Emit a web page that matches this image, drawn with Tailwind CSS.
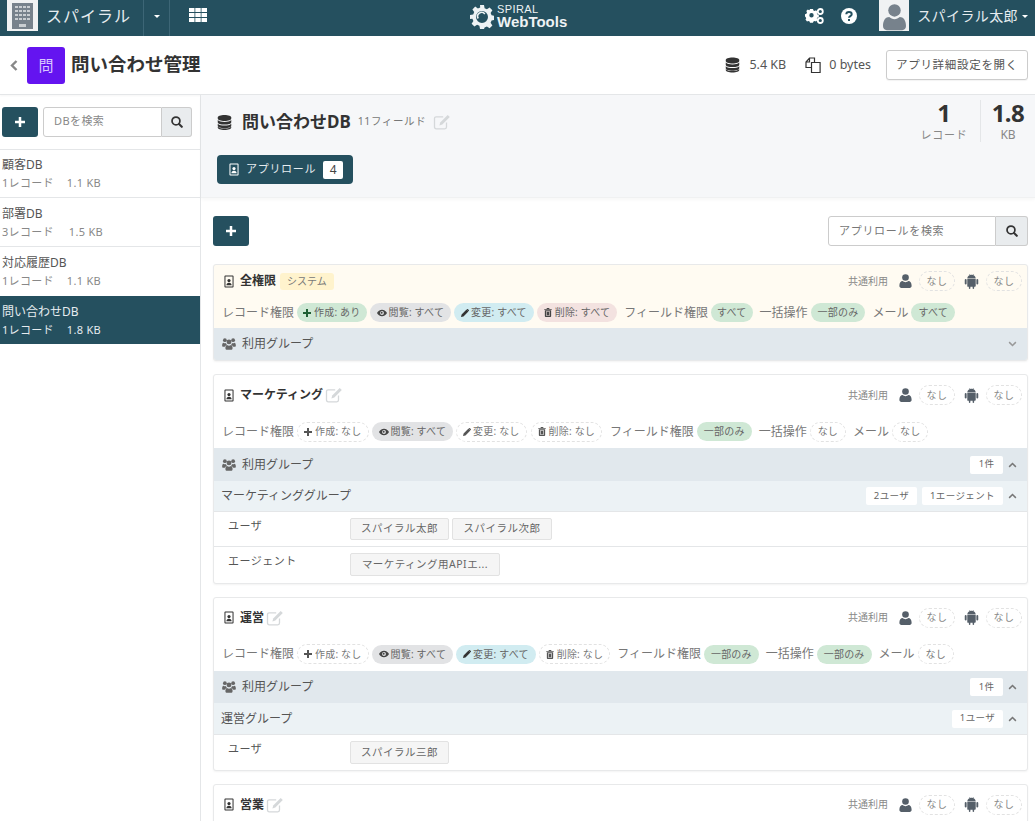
<!DOCTYPE html>
<html lang="ja">
<head>
    <meta charset="UTF-8" />
    <meta name="viewport" content="width=device-width, initial-scale=1.0" />
    <title>問い合わせ管理</title>
    <script src="https://cdn.jsdelivr.net/npm/@tailwindcss/browser@4"></script>
</head>
<body class="h-[821px] overflow-hidden bg-white text-[#555] font-['Noto_Sans','Noto_Sans_CJK_JP',sans-serif]">

    <!-- icon set -->
    <svg class="hidden">
        <symbol id="i-db" viewBox="0 0 16 16"><path d="M8 0C3.800 0 .8 1.100.8 2.600v1.200C.8 5.300 3.800 6.400 8 6.400s7.200-1.100 7.200-2.600V2.600C15.200 1.100 12.200 0 8 0z"/><path d="M.8 5.400v2.200C.8 9.100 3.800 10.200 8 10.200s7.200-1.100 7.200-2.600V5.400C13.600 6.900 11 7.500 8 7.500S2.400 6.900.8 5.400z"/><path d="M.8 9.200v2.200c0 1.500 3 2.600 7.200 2.600s7.200-1.100 7.200-2.600V9.200c-1.600 1.500-4.200 2.100-7.200 2.100S2.400 10.700.8 9.200z"/><path d="M.8 12.400v1c0 1.500 3 2.600 7.200 2.600s7.200-1.100 7.200-2.600v-1c-1.600 1.400-4.200 2-7.200 2s-5.600-.6-7.200-2z"/></symbol>
        <symbol id="i-plus" viewBox="0 0 12 12"><path d="M4.500 0h3v4.500H12v3H7.500V12h-3V7.500H0v-3h4.500z"/></symbol>
        <symbol id="i-search" viewBox="0 0 14 14"><path fill="none" stroke="currentColor" stroke-width="2" d="M5.800 1.200a4.600 4.600 0 1 0 0 9.200 4.600 4.600 0 0 0 0-9.200z"/><path fill="none" stroke="currentColor" stroke-width="2.400" stroke-linecap="round" d="M9.400 9.400l3.200 3.200"/></symbol>
        <symbol id="i-user" viewBox="0 0 14 16"><circle cx="7" cy="4" r="3.800"/><path d="M0 13.500C0 10 1.600 8 3.800 8c.8.700 2 1.300 3.200 1.300S9.400 8.700 10.200 8C12.400 8 14 10 14 13.500 14 15 13 16 11.700 16H2.300C1 16 0 15 0 13.500z"/></symbol>
        <symbol id="i-android" viewBox="0 0 16 16"><path d="M3.500 5.300h9v7.400c0 .5-.4.900-.9.900h-.8v1.600a.8.8 0 0 1-1.600 0v-1.600H6.800v1.600a.8.8 0 0 1-1.600 0v-1.600h-.8a.9.9 0 0 1-.9-.9z"/><path d="M3.500 4.700C3.600 3 4.500 1.800 5.900 1.200l-.6-1 .3-.2.7 1C7 .8 7.500.7 8 .7s1 .1 1.700.3l.7-1 .3.2-.6 1c1.400.6 2.300 1.800 2.400 3.500z"/><rect x=".8" y="5.300" width="2" height="5.800" rx="1"/><rect x="13.200" y="5.300" width="2" height="5.800" rx="1"/></symbol>
        <symbol id="i-users" viewBox="0 0 16 14"><circle cx="3.200" cy="2.600" r="2.200"/><circle cx="12.800" cy="2.600" r="2.200"/><circle cx="8" cy="4.600" r="2.800"/><path d="M0 9c0-2.600.6-3.600 1.800-3.600.5.400 1 .6 1.700.6.400 0 .7 0 1-.2.100 1 .6 1.800 1.300 2.400C4.300 8.500 3.300 9.600 3.100 10.200H1.300C.6 10.200 0 9.900 0 9zM16 9c0-2.600-.6-3.600-1.800-3.600-.5.400-1 .6-1.700.6-.4 0-.7 0-1-.2-.1 1-.6 1.800-1.300 2.400 1.500.3 2.500 1.400 2.700 2h1.800c.7 0 1.300-.3 1.300-1.200z"/><path d="M3.800 11.600c0-2.300 1-3.400 2-3.400.6.500 1.300.8 2.200.8s1.600-.3 2.200-.8c1 0 2 1.100 2 3.400 0 1.400-.8 2.200-1.900 2.200H5.700c-1.100 0-1.900-.8-1.900-2.200z"/></symbol>
        <symbol id="i-pencil" viewBox="0 0 12 12"><path d="M8.300.9l2.800 2.800-7.400 7.400L0 12l.9-3.700zM9.100.3c.4-.4 1-.4 1.400 0l1.200 1.200c.4.400.4 1 0 1.400l-.5.500L8.600.8z"/></symbol>
        <symbol id="i-eye" viewBox="0 0 14 10"><path fill-rule="evenodd" d="M7 .5C3.800.5 1.300 2.400 0 5c1.300 2.600 3.800 4.500 7 4.500s5.700-1.900 7-4.500C12.700 2.400 10.200.5 7 .5zM7 2.300a2.700 2.700 0 1 1 0 5.400 2.700 2.700 0 0 1 0-5.400z"/><circle cx="6.600" cy="4.600" r="1.300"/></symbol>
        <symbol id="i-trash" viewBox="0 0 10 12"><path fill-rule="evenodd" d="M3.500 0h3l.5 1.200h3v1.200H0V1.200h3zM.8 3h8.400v7.600c0 .8-.6 1.400-1.400 1.400H2.200C1.400 12 .8 11.400.8 10.600zm1.700 1.400v6h5v-6z"/><rect x="3.200" y="5" width="3.600" height="4.800"/></symbol>
        <symbol id="i-role" viewBox="0 0 10 14"><path fill-rule="evenodd" d="M1 .5h8c.5 0 .9.400.9.900v11.200c0 .5-.4.900-.9.900H1c-.5 0-.9-.4-.9-.9V1.400C.1.900.5.500 1 .5zm.2 1.100v10.800h7.600V1.600z"/><circle cx="5" cy="6" r="1.700"/><path d="M2.200 11c0-1.700 1-2.700 2.800-2.700s2.800 1 2.800 2.700z"/></symbol>
        <symbol id="i-edit" viewBox="0 0 18 16"><path fill="none" stroke="currentColor" stroke-width="1.300" d="M13.500 8.500v4.600c0 1-.8 1.700-1.700 1.700H3.200c-1 0-1.700-.7-1.700-1.700V4.500c0-1 .7-1.700 1.700-1.700h7"/><path d="M14.700 1l2.100 2.100-7.500 7.500-2.900.8.800-2.900z"/></symbol>
        <symbol id="i-down" viewBox="0 0 12 8"><path fill="none" stroke="currentColor" stroke-width="2" d="M1.500 1.500L6 6l4.500-4.500"/></symbol>
        <symbol id="i-up" viewBox="0 0 12 8"><path fill="none" stroke="currentColor" stroke-width="2" d="M1.500 6.500L6 2l4.500 4.500"/></symbol>
        <symbol id="i-gear" viewBox="0 0 24 24"><path fill-rule="evenodd" d="M10 0h4l.6 3.200 2.300 1 2.700-1.800 2.800 2.800-1.800 2.700 1 2.300 3.200.6v4l-3.200.6-1 2.300 1.800 2.700-2.800 2.800-2.700-1.800-2.300 1L14 24h-4l-.6-3.200-2.300-1-2.700 1.800-2.800-2.800 1.800-2.700-1-2.300L0 14v-4l3.200-.6 1-2.300-1.800-2.700 2.800-2.800 2.700 1.800 2.300-1zM12 6a6 6 0 1 0 0 12 6 6 0 0 0 0-12z"/><path fill="none" stroke="currentColor" stroke-width="1.600" d="M8.200 13.500A4 4 0 0 1 14.800 9"/></symbol>
    </svg>

    <!-- top bar -->
    <header class="relative flex h-9 items-stretch justify-between bg-[#25505f] text-white">
        <div class="flex items-stretch">
            <div class="ml-[7px] flex h-[31px] w-[31px] items-center justify-center bg-[#f0f2f3]">
                <svg class="h-[26px] w-[21px]" viewBox="0 0 21 26"><path fill="#77828c" d="M0 0h21v26H0z"/><path fill="#c9ced2" d="M3 3h3v2H3zM7 3h3v2H7zM11 3h3v2h-3zM15 3h3v2h-3zM3 7h3v2H3zM7 7h3v2H7zM11 7h3v2h-3zM15 7h3v2h-3zM3 11h3v2H3zM7 11h3v2H7zM11 11h3v2h-3zM15 11h3v2h-3zM3 15h3v2H3zM7 15h3v2H7zM11 15h3v2h-3zM15 15h3v2h-3zM7 21h7v3H7z"/></svg>
            </div>
            <div class="ml-2 flex w-[97px] items-center pb-[5px] text-[16px] tracking-[1px] text-[#e6ecef]">スパイラル</div>
            <div class="flex w-[27px] items-center justify-center border-x border-[#3d6676]">
                <span class="mb-[3px] h-0 w-0 border-x-[3px] border-t-[3px] border-x-transparent border-t-white"></span>
            </div>
            <div class="ml-[19px] flex items-center pb-[7px]">
                <svg class="h-[14px] w-[18px] fill-white" viewBox="0 0 18 14"><path d="M0 0h5.500v4H0zM6.300 0h5.400v4H6.300zM12.500 0H18v4h-5.500zM0 5h5.500v4H0zM6.300 5h5.400v4H6.300zM12.500 5H18v4h-5.500zM0 10h5.500v4H0zM6.300 10h5.400v4H6.300zM12.500 10H18v4h-5.500z"/></svg>
            </div>
        </div>

        <div class="absolute left-[470px] top-[4px] flex items-center">
            <svg class="h-[24px] w-[24px] fill-[#eef2f4] text-[#eef2f4]"><use href="#i-gear"/></svg>
            <div class="ml-[3px] text-[#eef2f4] font-['Liberation_Sans',sans-serif]">
                <div class="text-[11px] leading-[10px] tracking-[0.4px]">SPIRAL</div>
                <div class="text-[15px] leading-[15px] font-bold">WebTools</div>
            </div>
        </div>

        <div class="flex items-center">
            <svg class="mr-[7px] mb-[5px] h-4 w-[19px] fill-white" viewBox="0 0 19 16"><path fill-rule="evenodd" d="M5 3.500h3l.4 1.400 1.300.6 1.300-.7 1.500 1.500-.7 1.300.6 1.400 1.400.4v2.200l-1.400.4-.6 1.300.7 1.300-1.500 1.500-1.300-.7-1.300.5-.4 1.300H5l-.4-1.300-1.300-.5-1.300.7L.5 14l.7-1.300-.6-1.300L0 11V8.700l1.400-.4.6-1.400-.7-1.300L2.800 4l1.300.7.5-.2zM6.500 7.600a2.200 2.200 0 1 0 0 4.400 2.200 2.200 0 0 0 0-4.400z" transform="translate(0 -2.500)"/><circle cx="15.300" cy="3.500" r="2.500" fill="none" stroke="white" stroke-width="1.800"/><circle cx="15.300" cy="12.500" r="2.500" fill="none" stroke="white" stroke-width="1.800"/></svg>
            <svg class="mr-[22px] mb-[5px] ml-[10px] h-[16px] w-[16px]" viewBox="0 0 16 16"><circle cx="8" cy="8" r="8" fill="white"/><path fill="none" stroke="#25505f" stroke-width="2" d="M5.300 6.300c0-1.500 1.200-2.400 2.700-2.400s2.700.9 2.700 2.300c0 1.900-2.700 1.900-2.700 3.600"/><rect x="7" y="11" width="2" height="2" fill="#25505f"/></svg>
            <div class="flex h-[31px] w-[30px] items-end justify-center self-start bg-[#f0f2f3]">
                <svg class="h-[28px] w-[23px] fill-[#77828c]"><use href="#i-user"/></svg>
            </div>
            <div class="ml-2 pb-[5px] text-[14px] tracking-[0.4px] text-[#e6ecef]">スパイラル太郎</div>
            <span class="mr-[7px] ml-[4px] mb-[3px] h-0 w-0 border-x-[3px] border-t-[3px] border-x-transparent border-t-white"></span>
        </div>
    </header>

    <!-- app title bar -->
    <div class="flex h-[59px] items-center justify-between border-b border-[#e4e6e8] pr-[7px] shadow-[0_1px_2px_rgba(0,0,0,0.04)]">
        <div class="flex items-center">
            <svg class="ml-[10px] h-[11px] w-[8px] text-[#888]" viewBox="0 0 7 11"><path fill="none" stroke="currentColor" stroke-width="2.400" d="M6 1L1.500 5.500 6 10"/></svg>
            <div class="ml-[9px] flex h-[37px] w-[38px] items-center justify-center rounded-[3px] bg-[#6414f0] text-[15px] text-[#d8c8ff]">問</div>
            <h1 class="ml-[6px] mb-[2px] text-[18.500px] font-bold text-[#333]">問い合わせ管理</h1>
        </div>
        <div class="flex items-center text-[12.500px] text-[#555]">
            <svg class="h-4 w-[15px] fill-[#333]"><use href="#i-db"/></svg>
            <span class="ml-[9px]">5.4 KB</span>
            <svg class="ml-[19px] h-4 w-4 text-[#333]" viewBox="0 0 16 16"><path fill="none" stroke="currentColor" stroke-width="1.200" d="M6.500 5.500h8.600v10H6.500zM6 10.500H1V5l3.500-4h5v4M4.500 1v4H1"/></svg>
            <span class="ml-2">0 bytes</span>
            <button class="ml-[15px] h-[30px] w-[142px] rounded-[3px] border border-[#ccc] bg-white text-[11.500px] tracking-[0.7px] text-[#555] shadow-[0_1px_1px_rgba(0,0,0,0.05)]">アプリ詳細設定を開く</button>
        </div>
    </div>

    <div class="flex">
        <!-- db list -->
        <aside class="h-[726px] w-[201px] shrink-0 border-r border-[#e4e6e8]">
            <div class="flex h-[55px] items-center border-b border-[#e4e6e8] pl-[2px] pb-[1px]">
                <button class="flex h-[30px] w-[36px] shrink-0 items-center justify-center rounded-[3px] bg-[#25505f]">
                    <svg class="h-[10px] w-[10px] fill-white"><use href="#i-plus"/></svg>
                </button>
                <div class="ml-[5px] flex h-[30px] w-[119px] items-center rounded-l-[3px] border border-[#ccc] pl-[10px] text-[11px] tracking-[0.4px] text-[#888]">DBを検索</div>
                <div class="flex h-[30px] w-[30px] items-center justify-center rounded-r-[3px] border border-l-0 border-[#ccc] bg-[#e9ecee]">
                    <svg class="h-3 w-3 text-[#333] fill-none"><use href="#i-search"/></svg>
                </div>
            </div>
            <div class="h-[48px] border-b border-[#e4e6e8] pl-[2px] pt-[6px] text-[12px] leading-[17px]">
                <div class="text-[#555]">顧客DB</div>
                <div class="text-[11px] leading-[19px] tracking-[0.3px] text-[#888]">1レコード<span class="ml-[13px]">1.1 KB</span></div>
            </div>
            <div class="h-[49px] border-b border-[#e4e6e8] pl-[2px] pt-[7px] text-[12px] leading-[17px]">
                <div class="text-[#555]">部署DB</div>
                <div class="text-[11px] leading-[19px] tracking-[0.3px] text-[#888]">3レコード<span class="ml-[15px]">1.5 KB</span></div>
            </div>
            <div class="h-[49px] pl-[2px] pt-[7px] text-[12px] leading-[17px]">
                <div class="text-[#555]">対応履歴DB</div>
                <div class="text-[11px] leading-[19px] tracking-[0.3px] text-[#888]">1レコード<span class="ml-[13px]">1.1 KB</span></div>
            </div>
            <div class="h-[48px] bg-[#25505f] pl-[2px] pt-[7px] text-[12px] leading-[17px] text-[#e6ecef]">
                <div>問い合わせDB</div>
                <div class="text-[11px] leading-[19px] tracking-[0.3px]">1レコード<span class="ml-[13px]">1.8 KB</span></div>
            </div>
        </aside>

        <main class="min-w-0 flex-1">
            <!-- db header -->
            <section class="flex h-[103px] justify-between border-b border-[#f0f1f2] bg-[#f6f7f9] pl-[16px] shadow-[0_2px_3px_rgba(0,0,0,0.03)]">
                <div>
                    <div class="flex items-center pt-[14px]">
                        <svg class="h-[17px] w-[15px] fill-[#333]"><use href="#i-db"/></svg>
                        <h2 class="ml-[10px] text-[17px] font-bold leading-[26px] text-[#333]">問い合わせDB</h2>
                        <span class="ml-[7px] text-[10.500px] tracking-[0.6px] text-[#777]">11フィールド</span>
                        <svg class="ml-[7px] h-4 w-[18px] fill-[#d5d8da] text-[#d5d8da]"><use href="#i-edit"/></svg>
                    </div>
                    <button class="mt-[20px] flex h-[29px] w-[136px] items-center rounded-[4px] bg-[#25505f] pl-[12px] text-[11px] tracking-[0.7px] text-[#e6ecef]">
                        <svg class="h-[13px] w-[10px] fill-white"><use href="#i-role"/></svg>
                        <span class="ml-[7px]">アプリロール</span>
                        <span class="ml-[7px] flex h-[18px] w-[20px] items-center justify-center rounded-[2px] bg-white text-[12px] tracking-normal text-[#444]">4</span>
                    </button>
                </div>
                <div class="flex pt-[5px]">
                    <div class="w-[48px] text-center">
                        <div class="text-[24px] font-bold leading-[26px] text-[#333]">1</div>
                        <div class="mt-[2px] text-[11px] leading-[14px] tracking-[0.8px] text-[#888]">レコード</div>
                    </div>
                    <div class="ml-[12px] h-[42px] w-px bg-[#e4e6e8]"></div>
                    <div class="w-[54px] text-center">
                        <div class="text-[24px] font-bold leading-[26px] tracking-[-0.5px] text-[#333]">1.8</div>
                        <div class="mt-[2px] text-[12px] leading-[14px] text-[#888]">KB</div>
                    </div>
                </div>
            </section>

            <div class="pl-3 pr-[7px]">
                <!-- role toolbar -->
                <div class="flex h-[66px] items-start justify-between pt-[18px]">
                    <button class="flex h-[30px] w-[36px] items-center justify-center rounded-[3px] bg-[#25505f]">
                        <svg class="h-[10px] w-[10px] fill-white"><use href="#i-plus"/></svg>
                    </button>
                    <div class="flex">
                        <div class="flex h-[30px] w-[168px] items-center rounded-l-[3px] border border-[#ccc] bg-white pl-[10px] text-[11px] tracking-[0.7px] text-[#777]">アプリロールを検索</div>
                        <div class="flex h-[30px] w-[32px] items-center justify-center rounded-r-[3px] border border-l-0 border-[#ccc] bg-[#e9ecee]">
                            <svg class="h-3 w-3 text-[#333] fill-none"><use href="#i-search"/></svg>
                        </div>
                    </div>
                </div>

                <!-- 全権限 -->
                <article class="mb-[13px] overflow-hidden rounded-[3px] border border-[#e8e9ea] bg-[#fffbf2] shadow-[0_1px_2px_rgba(0,0,0,0.05)]">
                    <div class="flex h-[32px] items-center justify-between pl-[10px] pr-[5px]">
                        <div class="flex items-center">
                            <svg class="h-[13px] w-[10px] fill-[#333]"><use href="#i-role"/></svg>
                            <span class="ml-[6px] text-[12px] font-bold text-[#333]">全権限</span>
                            <span class="ml-[4px] rounded-[3px] bg-[#fff3cd] px-[7px] py-[1px] text-[10px] text-[#777]">システム</span>
                        </div>
                        <div class="flex items-center text-[10px] text-[#888]">
                            <span>共通利用</span>
                            <svg class="ml-[11px] h-[14px] w-[13px] fill-[#555f69]"><use href="#i-user"/></svg>
                            <span class="ml-[7px] flex h-[20px] w-[36px] items-center justify-center rounded-full border border-dashed border-[#e2e2e2] tracking-[0.6px]">なし</span>
                            <svg class="ml-[9px] h-[15px] w-[15px] fill-[#555f69]"><use href="#i-android"/></svg>
                            <span class="ml-[7px] flex h-[20px] w-[36px] items-center justify-center rounded-full border border-dashed border-[#e2e2e2] tracking-[0.6px]">なし</span>
                        </div>
                    </div>
                    <div class="flex h-[31px] items-center whitespace-nowrap pl-2 text-[12px] text-[#777]">
                        <span>レコード権限</span>
                        <span class="ml-[3px] flex h-[19px] items-center rounded-full bg-[#cfe8d5] px-[6px] text-[10px] tracking-[0.2px] text-[#666]"><svg class="mr-[3px] h-2 w-2 fill-[#1f5f34]"><use href="#i-plus"/></svg>作成: あり</span>
                        <span class="ml-[3px] flex h-[19px] items-center rounded-full bg-[#e2e3e5] px-[7px] text-[10px] tracking-[0.2px] text-[#666]"><svg class="mr-[2px] h-2 w-[10px] fill-[#444]"><use href="#i-eye"/></svg>閲覧: すべて</span>
                        <span class="ml-[3px] flex h-[19px] items-center rounded-full bg-[#d1ecf1] px-[7px] text-[10px] tracking-[0.2px] text-[#666]"><svg class="mr-[2px] h-2 w-2 fill-[#333]"><use href="#i-pencil"/></svg>変更: すべて</span>
                        <span class="ml-[3px] flex h-[19px] items-center rounded-full bg-[#f3e2e0] px-[7px] text-[10px] tracking-[0.2px] text-[#666]"><svg class="mr-[3px] h-[9px] w-2 fill-[#444]"><use href="#i-trash"/></svg>削除: すべて</span>
                        <span class="ml-[7px]">フィールド権限</span>
                        <span class="ml-[3px] flex h-[19px] items-center rounded-full bg-[#cfe8d5] px-[6px] text-[10px] tracking-[0.2px] text-[#666]">すべて</span>
                        <span class="ml-[7px]">一括操作</span>
                        <span class="ml-[3px] flex h-[19px] items-center rounded-full bg-[#cfe8d5] px-[7px] text-[10px] tracking-[0.2px] text-[#666]">一部のみ</span>
                        <span class="ml-[7px]">メール</span>
                        <span class="ml-[3px] flex h-[19px] items-center rounded-full bg-[#cfe8d5] px-[7px] text-[10px] tracking-[0.2px] text-[#666]">すべて</span>
                    </div>
                    <div class="flex h-[32px] items-center justify-between bg-[#e1e8ed] pl-2 pr-[10px]">
                        <div class="flex items-center text-[12px] text-[#555]">
                            <svg class="mr-[6px] h-[12px] w-[14px] fill-[#666]"><use href="#i-users"/></svg>利用グループ
                        </div>
                        <svg class="h-[6px] w-[9px] text-[#999]"><use href="#i-down"/></svg>
                    </div>
                </article>

                <!-- マーケティング -->
                <article class="mb-[13px] overflow-hidden rounded-[3px] border border-[#e8e9ea] bg-white shadow-[0_1px_2px_rgba(0,0,0,0.05)]">
                    <div class="flex h-[40px] items-center justify-between pl-[10px] pr-[5px]">
                        <div class="flex items-center">
                            <svg class="h-[13px] w-[10px] fill-[#333]"><use href="#i-role"/></svg>
                            <span class="ml-[6px] text-[12px] font-bold text-[#333]">マーケティング</span>
                            <svg class="ml-[2px] h-4 w-[18px] fill-[#d5d8da] text-[#d5d8da]"><use href="#i-edit"/></svg>
                        </div>
                        <div class="flex items-center text-[10px] text-[#888]">
                            <span>共通利用</span>
                            <svg class="ml-[11px] h-[14px] w-[13px] fill-[#555f69]"><use href="#i-user"/></svg>
                            <span class="ml-[7px] flex h-[20px] w-[36px] items-center justify-center rounded-full border border-dashed border-[#e2e2e2] tracking-[0.6px]">なし</span>
                            <svg class="ml-[9px] h-[15px] w-[15px] fill-[#555f69]"><use href="#i-android"/></svg>
                            <span class="ml-[7px] flex h-[20px] w-[36px] items-center justify-center rounded-full border border-dashed border-[#e2e2e2] tracking-[0.6px]">なし</span>
                        </div>
                    </div>
                    <div class="flex h-[33px] items-center whitespace-nowrap pl-2 text-[12px] text-[#777]">
                        <span>レコード権限</span>
                        <span class="ml-[3px] flex h-[20px] items-center rounded-full border border-dashed border-[#e2e2e2] px-[6px] text-[10px] tracking-[0.2px] text-[#777]"><svg class="mr-[3px] h-2 w-2 fill-[#555]"><use href="#i-plus"/></svg>作成: なし</span>
                        <span class="ml-[3px] flex h-[19px] items-center rounded-full bg-[#e2e3e5] px-[7px] text-[10px] tracking-[0.2px] text-[#666]"><svg class="mr-[2px] h-2 w-[10px] fill-[#444]"><use href="#i-eye"/></svg>閲覧: すべて</span>
                        <span class="ml-[3px] flex h-[20px] items-center rounded-full border border-dashed border-[#e2e2e2] px-[6px] text-[10px] tracking-[0.2px] text-[#777]"><svg class="mr-[2px] h-2 w-2 fill-[#555]"><use href="#i-pencil"/></svg>変更: なし</span>
                        <span class="ml-[4px] flex h-[20px] items-center rounded-full border border-dashed border-[#e2e2e2] px-[6px] text-[10px] tracking-[0.2px] text-[#777]"><svg class="mr-[3px] h-[9px] w-2 fill-[#555]"><use href="#i-trash"/></svg>削除: なし</span>
                        <span class="ml-[8px]">フィールド権限</span>
                        <span class="ml-[3px] flex h-[19px] items-center rounded-full bg-[#cfe8d5] px-[7px] text-[10px] tracking-[0.2px] text-[#666]">一部のみ</span>
                        <span class="ml-[7px]">一括操作</span>
                        <span class="ml-[3px] flex h-[20px] items-center rounded-full border border-dashed border-[#e2e2e2] px-[7px] text-[10px] tracking-[0.2px] text-[#777]">なし</span>
                        <span class="ml-[7px]">メール</span>
                        <span class="ml-[3px] flex h-[20px] items-center rounded-full border border-dashed border-[#e2e2e2] px-[7px] text-[10px] tracking-[0.2px] text-[#777]">なし</span>
                    </div>
                    <div class="flex h-[33px] items-center justify-between bg-[#e1e8ed] pl-2 pr-[10px]">
                        <div class="flex items-center text-[12px] text-[#555]">
                            <svg class="mr-[6px] h-[12px] w-[14px] fill-[#666]"><use href="#i-users"/></svg>利用グループ
                        </div>
                        <div class="flex items-center">
                            <span class="mr-[5px] flex h-[18px] w-[33px] items-center justify-center rounded-[2px] bg-white text-[9.500px] tracking-[0.4px] text-[#666]">1件</span>
                            <svg class="h-[6px] w-[9px] text-[#777]"><use href="#i-up"/></svg>
                        </div>
                    </div>
                    <div class="flex h-[31px] items-center justify-between border-b border-[#e4e6e8] bg-[#ecf2f5] pl-[7px] pr-[10px]">
                        <span class="text-[12px] text-[#555]">マーケティンググループ</span>
                        <div class="flex items-center gap-[5px] text-[9.500px] tracking-[0.4px] text-[#666]">
                            <span class="flex h-[18px] w-[51px] items-center justify-center rounded-[2px] bg-white">2ユーザ</span>
                            <span class="flex h-[18px] w-[81px] items-center justify-center rounded-[2px] bg-white">1エージェント</span>
                            <svg class="h-[6px] w-[9px] text-[#777]"><use href="#i-up"/></svg>
                        </div>
                    </div>
                    <div class="flex h-[35px] border-b border-[#e4e6e8]">
                        <span class="w-[136px] pl-[14px] pt-[6px] text-[11px] tracking-[0.5px] text-[#555]">ユーザ</span>
                        <div class="flex gap-[3px] pt-[6px]">
                            <span class="flex h-[22px] w-[99px] items-center justify-center rounded-[2px] border border-[#e2e2e2] bg-[#f5f5f5] text-[10.500px] tracking-[0.5px] text-[#666]">スパイラル太郎</span>
                            <span class="flex h-[22px] w-[100px] items-center justify-center rounded-[2px] border border-[#e2e2e2] bg-[#f5f5f5] text-[10.500px] tracking-[0.5px] text-[#666]">スパイラル次郎</span>
                        </div>
                    </div>
                    <div class="flex h-[36px]">
                        <span class="w-[136px] pl-[14px] pt-[6px] text-[11px] tracking-[0.5px] text-[#555]">エージェント</span>
                        <div class="pt-[6px]">
                            <span class="flex h-[23px] w-[150px] items-center justify-center rounded-[2px] border border-[#e2e2e2] bg-[#f5f5f5] text-[10.500px] tracking-[0.5px] text-[#666]">マーケティング用APIエ...</span>
                        </div>
                    </div>
                </article>

                <!-- 運営 -->
                <article class="mb-[13px] overflow-hidden rounded-[3px] border border-[#e8e9ea] bg-white shadow-[0_1px_2px_rgba(0,0,0,0.05)]">
                    <div class="flex h-[39px] items-center justify-between pl-[10px] pr-[5px]">
                        <div class="flex items-center">
                            <svg class="h-[13px] w-[10px] fill-[#333]"><use href="#i-role"/></svg>
                            <span class="ml-[6px] text-[12px] font-bold text-[#333]">運営</span>
                            <svg class="ml-[2px] h-4 w-[18px] fill-[#d5d8da] text-[#d5d8da]"><use href="#i-edit"/></svg>
                        </div>
                        <div class="flex items-center text-[10px] text-[#888]">
                            <span>共通利用</span>
                            <svg class="ml-[11px] h-[14px] w-[13px] fill-[#555f69]"><use href="#i-user"/></svg>
                            <span class="ml-[7px] flex h-[20px] w-[36px] items-center justify-center rounded-full border border-dashed border-[#e2e2e2] tracking-[0.6px]">なし</span>
                            <svg class="ml-[9px] h-[15px] w-[15px] fill-[#555f69]"><use href="#i-android"/></svg>
                            <span class="ml-[7px] flex h-[20px] w-[36px] items-center justify-center rounded-full border border-dashed border-[#e2e2e2] tracking-[0.6px]">なし</span>
                        </div>
                    </div>
                    <div class="flex h-[34px] items-center whitespace-nowrap pl-2 text-[12px] text-[#777]">
                        <span>レコード権限</span>
                        <span class="ml-[3px] flex h-[20px] items-center rounded-full border border-dashed border-[#e2e2e2] px-[6px] text-[10px] tracking-[0.2px] text-[#777]"><svg class="mr-[3px] h-2 w-2 fill-[#555]"><use href="#i-plus"/></svg>作成: なし</span>
                        <span class="ml-[3px] flex h-[19px] items-center rounded-full bg-[#e2e3e5] px-[7px] text-[10px] tracking-[0.2px] text-[#666]"><svg class="mr-[2px] h-2 w-[10px] fill-[#444]"><use href="#i-eye"/></svg>閲覧: すべて</span>
                        <span class="ml-[3px] flex h-[19px] items-center rounded-full bg-[#d1ecf1] px-[7px] text-[10px] tracking-[0.2px] text-[#666]"><svg class="mr-[2px] h-2 w-2 fill-[#333]"><use href="#i-pencil"/></svg>変更: すべて</span>
                        <span class="ml-[3px] flex h-[20px] items-center rounded-full border border-dashed border-[#e2e2e2] px-[6px] text-[10px] tracking-[0.2px] text-[#777]"><svg class="mr-[3px] h-[9px] w-2 fill-[#555]"><use href="#i-trash"/></svg>削除: なし</span>
                        <span class="ml-[7px]">フィールド権限</span>
                        <span class="ml-[3px] flex h-[19px] items-center rounded-full bg-[#cfe8d5] px-[7px] text-[10px] tracking-[0.2px] text-[#666]">一部のみ</span>
                        <span class="ml-[7px]">一括操作</span>
                        <span class="ml-[3px] flex h-[19px] items-center rounded-full bg-[#cfe8d5] px-[7px] text-[10px] tracking-[0.2px] text-[#666]">一部のみ</span>
                        <span class="ml-[7px]">メール</span>
                        <span class="ml-[3px] flex h-[20px] items-center rounded-full border border-dashed border-[#e2e2e2] px-[7px] text-[10px] tracking-[0.2px] text-[#777]">なし</span>
                    </div>
                    <div class="flex h-[32px] items-center justify-between bg-[#e1e8ed] pl-2 pr-[10px]">
                        <div class="flex items-center text-[12px] text-[#555]">
                            <svg class="mr-[6px] h-[12px] w-[14px] fill-[#666]"><use href="#i-users"/></svg>利用グループ
                        </div>
                        <div class="flex items-center">
                            <span class="mr-[5px] flex h-[18px] w-[33px] items-center justify-center rounded-[2px] bg-white text-[9.500px] tracking-[0.4px] text-[#666]">1件</span>
                            <svg class="h-[6px] w-[9px] text-[#777]"><use href="#i-up"/></svg>
                        </div>
                    </div>
                    <div class="flex h-[32px] items-center justify-between border-b border-[#e4e6e8] bg-[#ecf2f5] pl-[7px] pr-[10px]">
                        <span class="text-[12px] text-[#555]">運営グループ</span>
                        <div class="flex items-center gap-[5px] text-[9.500px] tracking-[0.4px] text-[#666]">
                            <span class="flex h-[18px] w-[51px] items-center justify-center rounded-[2px] bg-white">1ユーザ</span>
                            <svg class="h-[6px] w-[9px] text-[#777]"><use href="#i-up"/></svg>
                        </div>
                    </div>
                    <div class="flex h-[35px]">
                        <span class="w-[136px] pl-[14px] pt-[6px] text-[11px] tracking-[0.5px] text-[#555]">ユーザ</span>
                        <div class="pt-[6px]">
                            <span class="flex h-[23px] w-[99px] items-center justify-center rounded-[2px] border border-[#e2e2e2] bg-[#f5f5f5] text-[10.500px] tracking-[0.5px] text-[#666]">スパイラル三郎</span>
                        </div>
                    </div>
                </article>

                <!-- 営業 -->
                <article class="overflow-hidden rounded-[3px] border border-[#e8e9ea] bg-white shadow-[0_1px_2px_rgba(0,0,0,0.05)]">
                    <div class="flex h-[39px] items-center justify-between pl-[10px] pr-[5px]">
                        <div class="flex items-center">
                            <svg class="h-[13px] w-[10px] fill-[#333]"><use href="#i-role"/></svg>
                            <span class="ml-[6px] text-[12px] font-bold text-[#333]">営業</span>
                            <svg class="ml-[2px] h-4 w-[18px] fill-[#d5d8da] text-[#d5d8da]"><use href="#i-edit"/></svg>
                        </div>
                        <div class="flex items-center text-[10px] text-[#888]">
                            <span>共通利用</span>
                            <svg class="ml-[11px] h-[14px] w-[13px] fill-[#555f69]"><use href="#i-user"/></svg>
                            <span class="ml-[7px] flex h-[20px] w-[36px] items-center justify-center rounded-full border border-dashed border-[#e2e2e2] tracking-[0.6px]">なし</span>
                            <svg class="ml-[9px] h-[15px] w-[15px] fill-[#555f69]"><use href="#i-android"/></svg>
                            <span class="ml-[7px] flex h-[20px] w-[36px] items-center justify-center rounded-full border border-dashed border-[#e2e2e2] tracking-[0.6px]">なし</span>
                        </div>
                    </div>
                </article>
            </div>
        </main>
    </div>
</body>
</html>
